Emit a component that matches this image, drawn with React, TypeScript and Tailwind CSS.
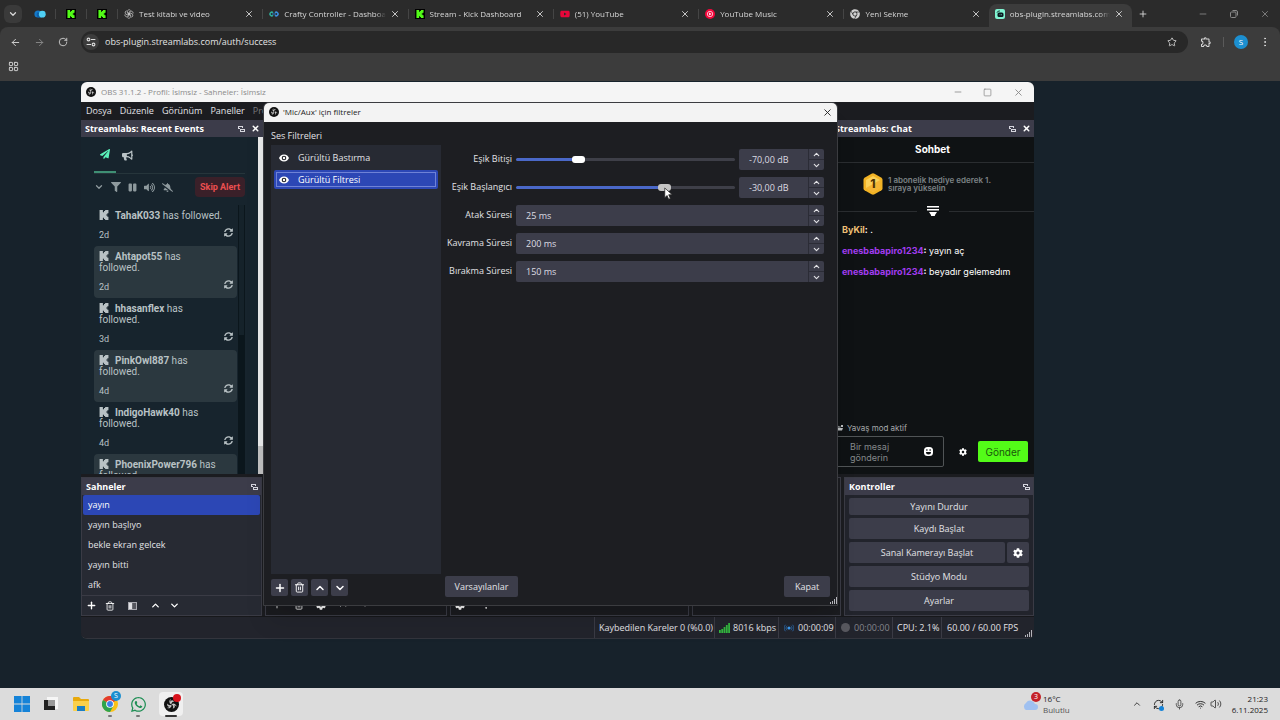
import React, { useState } from 'react';
import {
  ArrowLeft,
  ArrowRight,
  ChevronDown,
  ChevronUp,
  LayoutGrid,
  Mic,
  Minus,
  MoreVertical,
  Plus,
  RefreshCw,
  RotateCw,
  Square,
  Star,
  Trash2,
  Volume2,
  Wifi,
  X
} from 'lucide-react';
import {
  FaBellSlash,
  FaBullhorn,
  FaChrome,
  FaCog,
  FaFilter,
  FaPaperPlane,
  FaPause,
  FaSyncAlt,
  FaVolumeUp,
  FaWhatsapp,
  FaYoutube
} from 'react-icons/fa';
import { MdOutlineExtension } from 'react-icons/md';

/* ================= DATA ================= */

const events = [
  { name: 'TahaK033', age: '2d' },
  { name: 'Ahtapot55', age: '2d' },
  { name: 'hhasanflex', age: '3d' },
  { name: 'PinkOwl887', age: '4d' },
  { name: 'IndigoHawk40', age: '4d' },
  { name: 'PhoenixPower796', age: '' }
];

const scenes = ['yayın', 'yayın başlıyo', 'bekle ekran gelcek', 'yayın bitti', 'afk'];

const messages = [
  { user: 'ByKil', text: '.', color: 'text-[#f0c277]' },
  { user: 'enesbabapiro1234', text: 'yayın aç', color: 'text-[#a23cf0]' },
  { user: 'enesbabapiro1234', text: 'beyadır gelemedım', color: 'text-[#a23cf0]' }
];

/* ================= ICONS ================= */

const KickLogo: React.FC<{ className?: string }> = ({ className }) => (
  <svg viewBox="0 0 24 24" className={className} fill="currentColor">
    <path d="M1.333 0h8v5.333H12V2.667h2.667V0h8v8H20v2.667h-2.667v2.666H20V16h2.667v8h-8v-2.667H12v-2.666H9.333V24h-8Z" />
  </svg>
);

const KickTile = () => (
  <span className="flex size-2.5 shrink-0 items-center justify-center bg-black">
    <KickLogo className="size-2 text-[#53fc18]" />
  </span>
);

const ObsLogo: React.FC<{ className?: string }> = ({ className }) => (
  <svg viewBox="0 0 24 24" className={className}>
    <circle cx="12" cy="12" r="12" fill="#111" />
    {[0, 120, 240].map(a => (
      <path
        key={a}
        transform={`rotate(${a} 12 12)`}
        d="M11.200 3.200a4.600 4.600 0 0 0 .6 8.600 4.300 4.300 0 0 1 4.900-4.600A5 5 0 0 0 14 5.400a3.600 3.600 0 0 0-3.600 2.200 5 5 0 0 1 .8-4.400z"
        fill="#c4c4c4"
      />
    ))}
  </svg>
);

const CloudIcon = () => (
  <svg viewBox="0 0 12 8" className="h-2 w-3">
    <circle cx="4" cy="4" r="3.6" fill="#1479c9" />
    <path d="M4 7.6a3.6 3.6 0 0 1 0-5.6l4 5.6z" fill="#0d5ea8" />
    <circle cx="8.3" cy="4.2" r="3.4" fill="#4fd0f5" />
  </svg>
);

const RosetteIcon = () => (
  <svg viewBox="0 0 24 24" className="size-2.5 shrink-0" fill="none" stroke="#c8c8c8" strokeWidth="1.8">
    {[0, 60, 120, 180, 240, 300].map(a => (
      <path key={a} transform={`rotate(${a} 12 12)`} d="M8.2 9.8V6a4.3 4.3 0 0 1 7.6-2.6M8.2 9.8l7 4" />
    ))}
  </svg>
);

const CraftyIcon = () => (
  <svg viewBox="0 0 20 10" className="h-1.5 w-2.5 shrink-0" fill="none" strokeWidth="3">
    <path d="M8 2.5A3.5 3.5 0 1 0 8 7.5" stroke="#2fae9b" />
    <path d="M6 5h8" stroke="#2b7fd0" strokeWidth="2" />
    <path d="M12 2.5a3.5 3.5 0 1 1 0 5" stroke="#3c8fe0" />
  </svg>
);

const MusicIcon = () => (
  <svg viewBox="0 0 20 20" className="size-2.5 shrink-0">
    <circle cx="10" cy="10" r="10" fill="#f5063c" />
    <circle cx="10" cy="10" r="5.4" fill="none" stroke="#fff" strokeWidth="1.4" />
    <path d="M8.3 7.2 13 10l-4.700 2.800z" fill="#fff" />
  </svg>
);

const StreamlabsIcon = () => (
  <svg viewBox="0 0 20 20" className="size-2.5 shrink-0">
    <rect width="20" height="20" rx="4" fill="#80f5d2" />
    <path d="M4 7.500a4.500 4.500 0 0 1 4.500-3.500H10" stroke="#0a1a20" strokeWidth="1.600" fill="none" />
    <rect x="5" y="7" width="12" height="9" rx="3" fill="#0a1a20" />
    <path d="M10 10.500v2M13 10.500v2" stroke="#80f5d2" strokeWidth="1.400" />
  </svg>
);

const SiteInfoIcon = () => (
  <svg viewBox="0 0 16 16" className="size-2.5" fill="none" stroke="#dcdcdc" strokeWidth="1.800">
    <circle cx="4" cy="4" r="2.200" />
    <path d="M8 4h7M1 12h7" />
    <circle cx="12" cy="12" r="2.200" />
  </svg>
);

const PopOutIcon = () => (
  <svg viewBox="0 0 7 6" className="h-1.5 w-[7px]" fill="#d6d6de">
    <path d="M0 0h5v1H0zM0 1h1v2H0zM4 1h1v1H4zM1 2h1v1H1z" />
    <path d="M2 3h5v1H2zM2 4h1v1H2zM6 4h1v1H6zM2 5h5v1H2z" />
  </svg>
);

const EyeIcon = () => (
  <svg viewBox="0 0 20 16" className="h-2 w-2.5 shrink-0">
    <path d="M10 1C5 1 1.500 4.500 0 8c1.500 3.500 5 7 10 7s8.500-3.500 10-7c-1.500-3.500-5-7-10-7z" fill="#fff" />
    <circle cx="10" cy="8" r="4.600" fill="#1f2026" />
    <circle cx="10" cy="8" r="2.400" fill="#fff" />
  </svg>
);

const FilterViewIcon = () => (
  <svg viewBox="0 0 18 16" className="h-2 w-[9px]">
    <rect x="1" y="1" width="16" height="14" fill="none" stroke="#a9a9b0" strokeWidth="2" />
    <rect x="2" y="2" width="7" height="12" fill="#e0e0e4" />
    <rect x="9" y="2" width="7" height="12" fill="#55565e" />
  </svg>
);

const SizeGrip = () => (
  <svg viewBox="0 0 7 7" className="size-[7px]" fill="#b5b5bb">
    <path d="M0 5h1v2H0zM2 4h1v3H2zM4 2h1v5H4zM6 0h1v7H6z" />
  </svg>
);

const SignalIcon = () => (
  <svg viewBox="0 0 11 10" className="h-2.5 w-[11px]" fill="#33b83f">
    <path d="M0 7h1.800v3H0zM2.300 6h1.800v4H2.300zM4.600 4h1.800v6H4.600zM6.900 2h1.800v8H6.900zM9.200 0H11v10H9.200z" />
  </svg>
);

const OnAirIcon = () => (
  <svg viewBox="0 0 20 16" className="h-2 w-2.5" fill="none" stroke="#2b5f96" strokeWidth="2">
    <circle cx="10" cy="8" r="3.200" fill="#3b9af0" stroke="none" />
    <path d="M6 3.500a6 6 0 0 0 0 9M14 3.500a6 6 0 0 1 0 9M3 1.500a9 9 0 0 0 0 13M17 1.500a9 9 0 0 1 0 13" />
  </svg>
);

const BadgeIcon = () => (
  <span className="relative flex h-[22px] w-5 shrink-0 items-center justify-center">
    <svg viewBox="0 0 40 44" className="absolute inset-0 size-full">
      <path d="M17 1.500q3-1.700 6 0l14 8q2 1.500 2 4v17q0 2.500-2 4l-14 8q-3 1.500-6 0l-14-8q-2-1.500-2-4v-17q0-2.500 2-4z" fill="#f2b325" />
      <path d="M20 6 34 14v16l-14 8-14-8V14z" fill="#fbd058" />
      <path d="M34 14v16l-14 8-14-8z" fill="#f0a41c" opacity=".6" />
    </svg>
    <span className="relative text-xs font-extrabold text-[#4b3206]">1</span>
  </span>
);

const SmileIcon = () => (
  <svg viewBox="0 0 18 18" className="size-[9px]">
    <rect width="18" height="18" rx="7" fill="#fff" />
    <path d="M4.500 4.500h2.500v3H4.500zM11 4.500h2.500v3H11zM4 10h10a5 5 0 0 1-10 0z" fill="#0f1214" />
  </svg>
);

const ChestIcon = () => (
  <svg viewBox="0 0 16 12" className="h-1.5 w-2" fill="#b9bcbe">
    <path d="M0 1h6l1 2h4v2H4l-2 5H0zM5 6h11l-2 5H3z" />
    <path d="M12 0h4v4h-4z" />
  </svg>
);

/* ================= BROWSER ================= */

interface TabProps {
  icon: React.ReactNode;
  title: string;
  active?: boolean;
}

const BrowserTab: React.FC<TabProps> = ({ icon, title, active }) => (
  <div className="flex min-w-0 flex-1 items-center self-stretch">
    {!active && <span className="h-2.5 w-px bg-[#454545]" />}
    <div
      className={
        active
          ? 'mr-0.5 mt-1 flex min-w-0 flex-1 items-center self-stretch rounded-t-lg bg-[#3c3c3c] pb-1 pl-1.5 pr-2'
          : 'flex min-w-0 flex-1 items-center pl-1.5 pr-2'
      }
    >
      {icon}
      <span className="ml-[5px] min-w-0 flex-1 overflow-hidden whitespace-nowrap mask-r-from-90%">
        {title}
      </span>
      <button aria-label="Kapat" className="ml-1">
        <X className="size-2.5 text-[#e3e3e3]" />
      </button>
    </div>
  </div>
);

const Browser = () => (
  <header className="shrink-0 bg-[#2b2b2b] text-[8px] text-[#d8d8d8]">
    <div className="flex h-[27px] items-center pl-1">
      <button aria-label="Sekme ara" className="flex size-[18px] items-center justify-center rounded-md bg-[#3a3a3a]">
        <ChevronDown className="size-2.5" strokeWidth={3} />
      </button>
      <div className="ml-3 flex items-center">
        <CloudIcon />
        <span className="ml-[9px] mr-2.5 h-2.5 w-px bg-[#454545]" />
        <KickTile />
        <span className="mx-2.5 h-2.5 w-px bg-[#454545]" />
        <KickTile />
      </div>
      <nav className="ml-2.5 flex min-w-0 flex-1 self-stretch">
        <BrowserTab icon={<RosetteIcon />} title="Test kitabı ve video" />
        <BrowserTab icon={<CraftyIcon />} title="Crafty Controller - Dashboard" />
        <BrowserTab icon={<KickTile />} title="Stream - Kick Dashboard" />
        <BrowserTab icon={<FaYoutube className="size-2.5 shrink-0 text-[#e8063a]" />} title="(51) YouTube" />
        <BrowserTab icon={<MusicIcon />} title="YouTube Music" />
        <BrowserTab icon={<FaChrome className="size-2.5 shrink-0 text-[#d0d0d0]" />} title="Yeni Sekme" />
        <BrowserTab icon={<StreamlabsIcon />} title="obs-plugin.streamlabs.com/" active />
      </nav>
      <button aria-label="Yeni sekme" className="ml-1">
        <Plus className="size-2.5 text-[#e3e3e3]" />
      </button>
      <div className="ml-[50px] mr-2.5 flex gap-[21px] text-[#8a8a8a]">
        <button aria-label="Küçült"><Minus className="size-2.5" /></button>
        <button aria-label="Geri yükle">
          <svg viewBox="0 0 20 20" className="size-2.5" fill="none" stroke="currentColor" strokeWidth="2">
            <rect x="3" y="6" width="11" height="11" rx="2" />
            <path d="M7 3h7a3 3 0 0 1 3 3v7" />
          </svg>
        </button>
        <button aria-label="Pencereyi kapat"><X className="size-2.5" /></button>
      </div>
    </div>

    <div className="rounded-t-lg bg-[#3c3c3c]">
      <div className="flex h-[30px] items-center pl-[3px] pr-[9px]">
        <button aria-label="Geri" className="flex w-6 justify-center"><ArrowLeft className="size-[11px]" /></button>
        <button aria-label="İleri" className="flex w-6 justify-center text-[#8a8a8a]"><ArrowRight className="size-[11px]" /></button>
        <button aria-label="Yenile" className="flex w-6 justify-center"><RotateCw className="size-2.5" /></button>
        <div className="ml-1.5 flex h-[22px] flex-1 items-center rounded-full bg-[#282828] pl-0.5 pr-[11px]">
          <button aria-label="Site bilgileri" className="flex size-4 items-center justify-center rounded-full bg-[#3c3c3c]">
            <SiteInfoIcon />
          </button>
          <input
            aria-label="Adres çubuğu"
            defaultValue="obs-plugin.streamlabs.com/auth/success"
            className="ml-1.5 min-w-0 flex-1 bg-transparent text-[9px] text-[#e3e3e3] outline-none"
          />
          <button aria-label="Yer işareti ekle"><Star className="size-2.5" /></button>
        </div>
        <button aria-label="Uzantılar" className="ml-3"><MdOutlineExtension className="size-3" /></button>
        <span className="ml-[11px] h-2.5 w-px bg-[#5a5a5a]" />
        <button className="ml-2.5 flex size-3.5 items-center justify-center rounded-full bg-[#1c8fd0] text-[8px] text-white">S</button>
        <button aria-label="Menü" className="ml-[11px]"><MoreVertical className="size-3" /></button>
      </div>
      <div className="flex h-6 items-start pl-2 pt-1">
        <button aria-label="Uygulamalar"><LayoutGrid className="size-[11px]" /></button>
      </div>
    </div>
  </header>
);

/* ================= OBS DOCKS ================= */

const DockTitle: React.FC<{ title: string; closable?: boolean }> = ({ title, closable }) => (
  <div className="flex h-[17px] shrink-0 items-center bg-[#3c3c4a] pl-1 pr-[3px] text-[9px] font-bold text-white">
    <h2 className="flex-1 whitespace-nowrap">{title}</h2>
    <button aria-label="Ayır"><PopOutIcon /></button>
    {closable && (
      <button aria-label="Kapat" className="ml-1.5"><X className="size-[9px]" strokeWidth={4} /></button>
    )}
  </div>
);

const EventsDock = () => (
  <section className="flex w-[182px] shrink-0 flex-col overflow-hidden">
    <DockTitle title="Streamlabs: Recent Events" closable />
    <div className="flex min-h-0 flex-1">
      <div className="flex min-w-0 flex-1 flex-col bg-[#17242d] pl-[13px] pr-[13px] font-['Roboto',sans-serif] text-[#b9c2c5]">
        <div className="flex border-b border-[#26353b]">
          <button aria-label="Etkinlikler" className="-mb-px flex h-9 w-[22px] items-center justify-center border-b-2 border-[#3f8f74] text-[#5af0b8]">
            <FaPaperPlane className="size-2.5" />
          </button>
          <button aria-label="Duyurular" className="flex h-9 w-[22px] items-center justify-center">
            <FaBullhorn className="size-[11px]" />
          </button>
        </div>
        <div className="mt-[3px] flex shrink-0 items-center gap-[7px] text-[#8f9a9e]">
          <button aria-label="Daralt"><ChevronDown className="size-2.5" strokeWidth={3} /></button>
          <button aria-label="Filtrele"><FaFilter className="size-2.5" /></button>
          <button aria-label="Duraklat"><FaPause className="size-[9px]" /></button>
          <button aria-label="Ses"><FaVolumeUp className="size-[11px]" /></button>
          <button aria-label="Sessize al"><FaBellSlash className="size-[11px]" /></button>
          <button className="ml-auto h-5 w-[50px] whitespace-nowrap rounded-sm bg-[#3a2029] text-[9px] font-bold text-[#ea4f50]">
            Skip Alert
          </button>
        </div>
        <div className="mt-2 flex min-h-0 flex-1">
          <ul className="min-w-0 flex-1 overflow-hidden">
            {events.map((e, i) => (
              <li
                key={e.name}
                className={
                  i % 2
                    ? 'rounded-sm bg-[#2b383f] pb-1 pl-[5px] pr-1 pt-[5px]'
                    : 'pb-1 pl-[5px] pr-1 pt-[5px]'
                }
              >
                <p className="whitespace-nowrap text-[10px] leading-[11px]">
                  <KickLogo className="mr-1.5 inline-block size-2.5 align-[-1px]" />
                  <b className="font-bold">{e.name}</b>
                  {e.name.length > 8 ? (
                    <> has<br />followed.</>
                  ) : (
                    <> has followed.</>
                  )}
                </p>
                <div className="mt-[5px] flex h-4 items-center justify-between">
                  <span className="pt-0.5 text-[9px]">{e.age}</span>
                  <button aria-label="Tekrarla" className="pb-1"><FaSyncAlt className="size-[9px]" /></button>
                </div>
              </li>
            ))}
          </ul>
          <div className="ml-px w-[7px] bg-[#0b161c]">
            <div className="mx-px h-[130px] bg-[#15222a]" />
          </div>
        </div>
      </div>
      <div className="flex w-[5px] flex-col justify-end bg-[#ececec]">
        <div className="h-7 bg-[#c2c2c2]" />
      </div>
    </div>
  </section>
);

const ChatDock = () => (
  <section className="flex w-[203px] shrink-0 flex-col overflow-hidden bg-[#0f1214] font-['Inter',sans-serif]">
    <div className="font-['Open_Sans',sans-serif]">
      <DockTitle title="Streamlabs: Chat" closable />
    </div>
    <h3 className="h-[26px] border-b border-[#2a2d30] text-center text-[10px] font-bold leading-6 text-white">
      Sohbet
    </h3>
    <div className="flex h-[42px] items-center gap-[5px] pl-8">
      <BadgeIcon />
      <p className="w-28 text-[8px] font-semibold leading-2 text-[#7d8386]">
        1 abonelik hediye ederek 1. sıraya yükselin
      </p>
    </div>
    <div className="flex h-3 items-center gap-2.5">
      <span className="h-px flex-1 bg-[#2a2d30]" />
      <button aria-label="Sıralamayı göster">
        <svg viewBox="0 0 12 10" className="h-2.5 w-3" fill="#fff">
          <path d="M0 0h12v1.500H0zM0 3h12v1.500H0zM2 6h8L8 9a2 2 0 0 1-4 0z" />
        </svg>
      </button>
      <span className="h-px flex-1 bg-[#2a2d30]" />
    </div>
    <ul className="flex-1 pl-[11px] pt-0.5 text-[9px] leading-[21px] text-white">
      {messages.map(m => (
        <li key={m.text}>
          <span className={`font-bold ${m.color}`}>{m.user}</span>
          <b>:</b> {m.text}
        </li>
      ))}
    </ul>
    <div className="pb-[7px] pl-1">
      <p className="flex items-center gap-1 text-[8px] leading-4 text-[#a6a9ab]">
        <ChestIcon />
        Yavaş mod aktif
      </p>
      <div className="flex items-center pr-1.5">
        <div className="flex h-[31px] flex-1 items-center rounded-xs border border-[#505456] pl-3.5 pr-2.5">
          <textarea
            aria-label="Bir mesaj gönderin"
            placeholder="Bir mesaj gönderin"
            rows={2}
            className="mr-auto w-14 resize-none overflow-hidden bg-transparent text-[9px] leading-[11px] outline-none placeholder:text-[#85898b]"
          />
          <button aria-label="Emoji"><SmileIcon /></button>
        </div>
        <button aria-label="Sohbet ayarları" className="ml-[15px] mr-[11px]"><FaCog className="size-2 text-white" /></button>
        <button className="h-[21px] w-[50px] rounded-xs bg-[#53fc18] text-[10px] text-[#1a560c]">Gönder</button>
      </div>
    </div>
  </section>
);

const ScenesDock = () => {
  const [selected, setSelected] = useState(scenes[0]);
  return (
    <section className="flex w-[181px] shrink-0 flex-col border border-[#3a3b45] bg-[#272a33]">
      <DockTitle title="Sahneler" />
      <ul className="flex flex-1 flex-col px-px">
        {scenes.map(s => (
          <li key={s} className="flex flex-1">
            <button
              onClick={() => setSelected(s)}
              className={
                s === selected
                  ? 'w-full rounded-xs bg-[#2c47b5] pl-[5px] text-left text-white'
                  : 'w-full pl-[5px] text-left'
              }
            >
              {s}
            </button>
          </li>
        ))}
      </ul>
      <div className="flex h-5 items-center border-t border-[#3a3b45] pl-1 text-white">
        <button aria-label="Ekle"><Plus className="size-[11px]" strokeWidth={3} /></button>
        <button aria-label="Sil" className="ml-2"><Trash2 className="size-2.5" /></button>
        <button aria-label="Filtreler" className="ml-[13px]"><FilterViewIcon /></button>
        <button aria-label="Yukarı" className="ml-[13px]"><ChevronUp className="size-[11px]" strokeWidth={3} /></button>
        <button aria-label="Aşağı" className="ml-2"><ChevronDown className="size-[11px]" strokeWidth={3} /></button>
      </div>
    </section>
  );
};

const ControlsDock = () => (
  <section className="flex w-[190px] shrink-0 flex-col border border-[#3a3b45] bg-[#22242c]">
    <DockTitle title="Kontroller" />
    <div className="flex flex-1 flex-col gap-[3px] px-1 pb-1 pt-[3px]">
      <button className="h-[17px] rounded-xs bg-[#3c3d4a]">Yayını Durdur</button>
      <button className="flex-1 rounded-xs bg-[#3c3d4a]">Kaydı Başlat</button>
      <div className="flex flex-1 gap-0.5">
        <button className="flex-1 rounded-xs bg-[#3c3d4a]">Sanal Kamerayı Başlat</button>
        <button aria-label="Sanal kamera ayarları" className="flex w-[22px] items-center justify-center rounded-xs bg-[#3c3d4a]">
          <FaCog className="size-2.5 text-white" />
        </button>
      </div>
      <button className="flex-1 rounded-xs bg-[#3c3d4a]">Stüdyo Modu</button>
      <button className="flex-1 rounded-xs bg-[#3c3d4a]">Ayarlar</button>
    </div>
  </section>
);

const StatusBar = () => (
  <footer className="flex h-[22px] shrink-0 items-center justify-end border-t border-[#17181b] bg-[#22242c] pr-0.5">
    <span className="flex h-full items-center border-l border-[#3a3b45] pl-1">Kaybedilen Kareler 0 (%0.0)</span>
    <span className="ml-px flex h-full w-16 items-center gap-[3px] whitespace-nowrap border-l border-[#3a3b45] pl-1">
      <SignalIcon />
      8016 kbps
    </span>
    <span className="flex h-full w-[57px] items-center gap-1 border-l border-[#3a3b45] pl-[5px]">
      <OnAirIcon />
      00:00:09
    </span>
    <span className="flex h-full w-[57px] items-center gap-1 border-l border-[#3a3b45] pl-[5px] text-[#85868c]">
      <span className="size-[9px] rounded-full bg-[#57575e]" />
      00:00:00
    </span>
    <span className="flex h-full w-[49px] items-center whitespace-nowrap border-l border-[#3a3b45] pl-1">CPU: 2.1%</span>
    <span className="flex h-full w-[84px] items-center whitespace-nowrap border-l border-[#3a3b45] pl-[5px]">60.00 / 60.00 FPS</span>
    <span className="self-end pb-px"><SizeGrip /></span>
  </footer>
);

const ObsWindow = () => (
  <div className="flex min-w-0 flex-1 flex-col overflow-hidden rounded-md border-b border-[#33353d] bg-[#1b1c20]">
    <div className="flex h-5 shrink-0 items-center bg-[#f5f5f5] pl-[5px] pr-2.5 text-[8px] text-[#8b8b8b]">
      <ObsLogo className="size-2.5" />
      <h1 className="ml-[5px] flex-1">OBS 31.1.2 - Profil: İsimsiz - Sahneler: İsimsiz</h1>
      <button aria-label="Küçült" className="mr-5"><Minus className="size-2.5" strokeWidth={2} /></button>
      <button aria-label="Ekranı kapla" className="mr-[21px]"><Square className="size-[9px]" /></button>
      <button aria-label="Kapat"><X className="size-[11px]" strokeWidth={2} /></button>
    </div>
    <nav className="flex h-[18px] shrink-0 items-center gap-2 pl-[5px]">
      <button>Dosya</button>
      <button>Düzenle</button>
      <button>Görünüm</button>
      <button>Paneller</button>
      <button className="text-[#77787c]">Profil</button>
    </nav>
    <div className="flex min-h-0 flex-1 justify-between">
      <EventsDock />
      <ChatDock />
    </div>
    <div className="mt-[3px] flex h-[139px] shrink-0 gap-[3px]">
      <ScenesDock />
      <div className="flex w-[182px] items-end border border-[#3a3b45]">
        <div className="flex h-5 w-full items-center gap-3 pl-1.5 text-white">
          <Plus className="size-2.5" />
          <Trash2 className="size-2.5" />
          <FaCog className="size-2.5" />
          <ChevronUp className="size-2.5" />
          <ChevronDown className="size-2.5" />
        </div>
      </div>
      <div className="flex flex-1 items-end border border-[#3a3b45]">
        <div className="flex h-5 items-center gap-4 pl-1 text-white">
          <FaCog className="size-2.5" />
          <MoreVertical className="size-2.5" />
        </div>
      </div>
      <div className="w-[149px] border border-[#3a3b45]" />
      <ControlsDock />
    </div>
    <StatusBar />
  </div>
);

/* ================= FILTER DIALOG ================= */

const SpinBox: React.FC<{ id: string; value: string; className?: string }> = ({ id, value, className }) => (
  <div className={`flex h-[21px] rounded-xs bg-[#3c3d4a] ${className ?? ''}`}>
    <input
      id={id}
      defaultValue={value}
      className="min-w-0 flex-1 bg-transparent pl-2.5 text-[9px] text-[#dcdce2] outline-none"
    />
    <div className="flex w-4 flex-col border-l border-[#2b2c36]">
      <button aria-label="Artır" className="flex flex-1 items-center justify-center border-b border-[#2b2c36]">
        <ChevronUp className="size-[9px]" strokeWidth={3} />
      </button>
      <button aria-label="Azalt" className="flex flex-1 items-center justify-center">
        <ChevronDown className="size-[9px]" strokeWidth={3} />
      </button>
    </div>
  </div>
);

const DbRow: React.FC<{ id: string; label: string; initial: number; pressed?: boolean }> = ({
  id,
  label,
  initial,
  pressed
}) => {
  const [db, setDb] = useState(initial);
  const pct = ((db + 96) / 96) * 100;
  return (
    <>
      <label htmlFor={id} className="whitespace-nowrap pb-0.5 text-right">{label}</label>
      <div className="flex items-center gap-1">
        <input
          type="range"
          aria-label={label}
          min={-96}
          max={0}
          value={db}
          onChange={e => setDb(Number(e.target.value))}
          style={{ backgroundImage: `linear-gradient(to right, #4a68c8 ${pct}%, #3e3f48 ${pct}%)` }}
          className={`h-[3px] min-w-0 flex-1 appearance-none rounded-full [&::-webkit-slider-thumb]:h-[7px] [&::-webkit-slider-thumb]:w-[13px] [&::-webkit-slider-thumb]:appearance-none [&::-webkit-slider-thumb]:rounded-[3px] ${
            pressed
              ? '[&::-webkit-slider-thumb]:bg-[#c4c4c4]'
              : '[&::-webkit-slider-thumb]:bg-white'
          }`}
        />
        <SpinBox key={db} id={id} value={`${db},00 dB`} className="w-[85px]" />
      </div>
    </>
  );
};

const MsRow: React.FC<{ id: string; label: string; value: string }> = ({ id, label, value }) => (
  <>
    <label htmlFor={id} className="whitespace-nowrap pb-0.5 text-right">{label}</label>
    <SpinBox id={id} value={value} />
  </>
);

const FilterDialog = () => {
  const [selected, setSelected] = useState('Gürültü Filtresi');
  return (
    <div
      role="dialog"
      aria-label="'Mic/Aux' için filtreler"
      className="absolute bottom-[82px] left-[263px] right-[442px] top-[21px] flex flex-col overflow-hidden rounded-t-md border border-[#3b3c40] bg-[#1d1e22] shadow-xl"
    >
      <div className="-mx-px -mt-px flex h-5 shrink-0 items-center bg-[#f3f3f3] pl-1.5 pr-[5px] text-[8px] text-[#222]">
        <ObsLogo className="size-2.5" />
        <h2 className="ml-1 flex-1">'Mic/Aux' için filtreler</h2>
        <button aria-label="Kapat"><X className="size-[11px]" strokeWidth={2} /></button>
      </div>
      <div className="flex min-h-0 flex-1">
        <div className="flex w-[177px] shrink-0 flex-col pl-[7px]">
          <h3 className="pb-0.5 pt-[7px] leading-[14px]">Ses Filtreleri</h3>
          <ul className="flex flex-1 flex-col gap-0.5 bg-[#272a33] p-[3px]">
            {['Gürültü Bastırma', 'Gürültü Filtresi'].map(f => (
              <li key={f}>
                <button
                  onClick={() => setSelected(f)}
                  className={
                    f === selected
                      ? 'flex h-[19px] w-full items-center rounded-xs bg-[#2c47b5] p-0.5 text-white'
                      : 'flex h-5 w-full items-center p-0.5'
                  }
                >
                  <span
                    className={
                      f === selected
                        ? 'flex h-full w-full items-center border border-[#6f82d6] pl-0.5'
                        : 'flex h-full w-full items-center pl-[3px]'
                    }
                  >
                    <EyeIcon />
                    <span className="ml-[9px]">{f}</span>
                  </span>
                </button>
              </li>
            ))}
          </ul>
          <div className="flex h-[31px] items-center gap-[3px] pb-1 text-white">
            <button aria-label="Ekle" className="flex size-[17px] items-center justify-center rounded-xs bg-[#3c3d4a]"><Plus className="size-3" strokeWidth={3} /></button>
            <button aria-label="Sil" className="flex size-[17px] items-center justify-center rounded-xs bg-[#3c3d4a]"><Trash2 className="size-[11px]" /></button>
            <button aria-label="Yukarı" className="flex size-[17px] items-center justify-center rounded-xs bg-[#3c3d4a]"><ChevronUp className="size-3" strokeWidth={3} /></button>
            <button aria-label="Aşağı" className="flex size-[17px] items-center justify-center rounded-xs bg-[#3c3d4a]"><ChevronDown className="size-3" strokeWidth={3} /></button>
          </div>
        </div>
        <div className="flex min-w-0 flex-1 flex-col justify-between pl-1">
          <div className="grid grid-cols-[67px_1fr] items-center gap-x-1 gap-y-[7px] pr-[13px] pt-[27px]">
            <DbRow id="close" label="Eşik Bitişi" initial={-70} />
            <DbRow id="open" label="Eşik Başlangıcı" initial={-30} pressed />
            <MsRow id="attack" label="Atak Süresi" value="25 ms" />
            <MsRow id="hold" label="Kavrama Süresi" value="200 ms" />
            <MsRow id="release" label="Bırakma Süresi" value="150 ms" />
          </div>
          <div className="flex items-end justify-between pb-px">
            <button className="mb-[7px] h-[21px] w-[73px] rounded-xs bg-[#3c3d4a]">Varsayılanlar</button>
            <div className="flex items-end">
              <button className="mb-[7px] h-[21px] w-[46px] rounded-xs bg-[#3c3d4a]">Kapat</button>
              <SizeGrip />
            </div>
          </div>
        </div>
      </div>
    </div>
  );
};

/* ================= TASKBAR ================= */

const Taskbar = () => (
  <footer className="flex h-8 shrink-0 items-center bg-[#dcdcdc] pl-3.5 pr-3 text-[8px] text-[#222]">
    <div className="flex items-center gap-3">
      <button aria-label="Başlat">
        <svg viewBox="0 0 16 16" className="size-4" fill="#1583d8">
          <path d="M0 0h7.600v7.600H0zM8.400 0H16v7.600H8.400zM0 8.400h7.600V16H0zM8.400 8.400H16V16H8.400z" />
        </svg>
      </button>
      <button aria-label="Görev görünümü">
        <svg viewBox="0 0 18 18" className="size-[18px]">
          <rect x="5" y="2" width="11" height="12" fill="#f6f6f6" />
          <path d="M2 5h4v6h7v4H2z" fill="#222" />
          <rect x="6" y="5" width="7" height="6" fill="#9a9a9a" />
        </svg>
      </button>
      <button aria-label="Dosya Gezgini">
        <svg viewBox="0 0 18 16" className="h-4 w-[18px]">
          <path d="M1 2a1 1 0 0 1 1-1h5l2 2h7a1 1 0 0 1 1 1v10H1z" fill="#e8a90c" />
          <path d="M1 5h16v9a1 1 0 0 1-1 1H2a1 1 0 0 1-1-1z" fill="#fbd04a" />
          <path d="M5 10h8v5H5z" fill="#1b7fc4" />
        </svg>
      </button>
      <button aria-label="Chrome" className="relative">
        <svg viewBox="0 0 20 20" className="size-4">
          <circle cx="10" cy="10" r="10" fill="#fbc116" />
          <path d="M10 10 1.300 5A10 10 0 0 1 18.700 5z" fill="#e33b2e" />
          <path d="M10 10 1.300 5A10 10 0 0 0 10 20l4.300-7.500z" fill="#2da44e" />
          <circle cx="10" cy="10" r="4.800" fill="#fff" />
          <circle cx="10" cy="10" r="3.700" fill="#3c7fe8" />
        </svg>
        <span className="absolute -right-[3px] -top-[5px] size-2.5 rounded-full bg-[#1c8fd0] text-center text-[7px] leading-2.5 text-white">S</span>
        <span className="absolute -bottom-[5px] left-1.5 h-0.5 w-1 rounded-full bg-[#777]" />
      </button>
      <button aria-label="WhatsApp" className="relative">
        <FaWhatsapp className="size-[17px] text-[#1f8f55]" />
        <span className="absolute -bottom-1 left-1.5 h-0.5 w-1 rounded-full bg-[#777]" />
      </button>
      <button aria-label="OBS Studio" className="relative flex size-6 items-center justify-center rounded-sm bg-[#f0f0f0]">
        <ObsLogo className="size-[15px]" />
        <span className="absolute right-0.5 top-0.5 size-2 rounded-full bg-[#d8121c]" />
        <span className="absolute -bottom-px left-1.5 h-0.5 w-3 rounded-full bg-[#333]" />
      </button>
    </div>
    <button className="ml-auto flex items-center gap-1 text-left leading-[11px]">
      <span className="relative">
        <svg viewBox="0 0 18 18" className="size-[18px]">
          <path d="M5 15a4 4 0 0 1 0-7 5 5 0 0 1 9 1 3 3 0 0 1 0 6z" fill="#9fc0f0" />
        </svg>
        <span className="absolute -top-[3px] -right-0.5 size-2.5 rounded-full bg-[#c42028] text-center text-[7px] leading-2.5 text-white">3</span>
      </span>
      <span>
        16°C
        <br />
        <span className="text-[#555]">Bulutlu</span>
      </span>
    </button>
    <div className="ml-[62px] flex items-center">
      <button aria-label="Gizli simgeler"><ChevronUp className="size-2.5" /></button>
      <button aria-label="Eşitleme" className="relative ml-[11px]">
        <RefreshCw className="size-[11px]" />
        <span className="absolute -bottom-px right-0 size-[5px] rounded-full bg-[#1583d8]" />
      </button>
      <button aria-label="Mikrofon" className="ml-2.5"><Mic className="size-[11px]" strokeWidth={1.5} /></button>
      <button aria-label="Wi-Fi" className="ml-2.5"><Wifi className="size-[11px]" /></button>
      <button aria-label="Ses" className="ml-1"><Volume2 className="size-3" strokeWidth={1.5} /></button>
      <time className="ml-2.5 text-right leading-[11px]">
        21:23
        <br />
        6.11.2025
      </time>
    </div>
  </footer>
);

/* ================= PAGE ================= */

const App = () => (
  <div className="flex h-screen flex-col overflow-hidden bg-[#17222b] font-['Open_Sans','Noto_Sans',sans-serif] text-[9px] leading-3 text-[#e2e2e6]">
    <Browser />
    <main className="relative flex min-h-0 flex-1 pb-[49px] pl-[81px] pr-[246px] pt-px">
      <ObsWindow />
      <FilterDialog />
      {/* mouse pointer over the dragged slider */}
      <svg viewBox="0 0 12 18" className="absolute left-[664px] top-[106px] h-3.5 w-[9px]">
        <path d="M1 1v13l3-3 2.200 5 2.300-1-2.200-5H11z" fill="#fff" stroke="#222" strokeWidth="1" />
      </svg>
    </main>
    <Taskbar />
  </div>
);

export default App;
